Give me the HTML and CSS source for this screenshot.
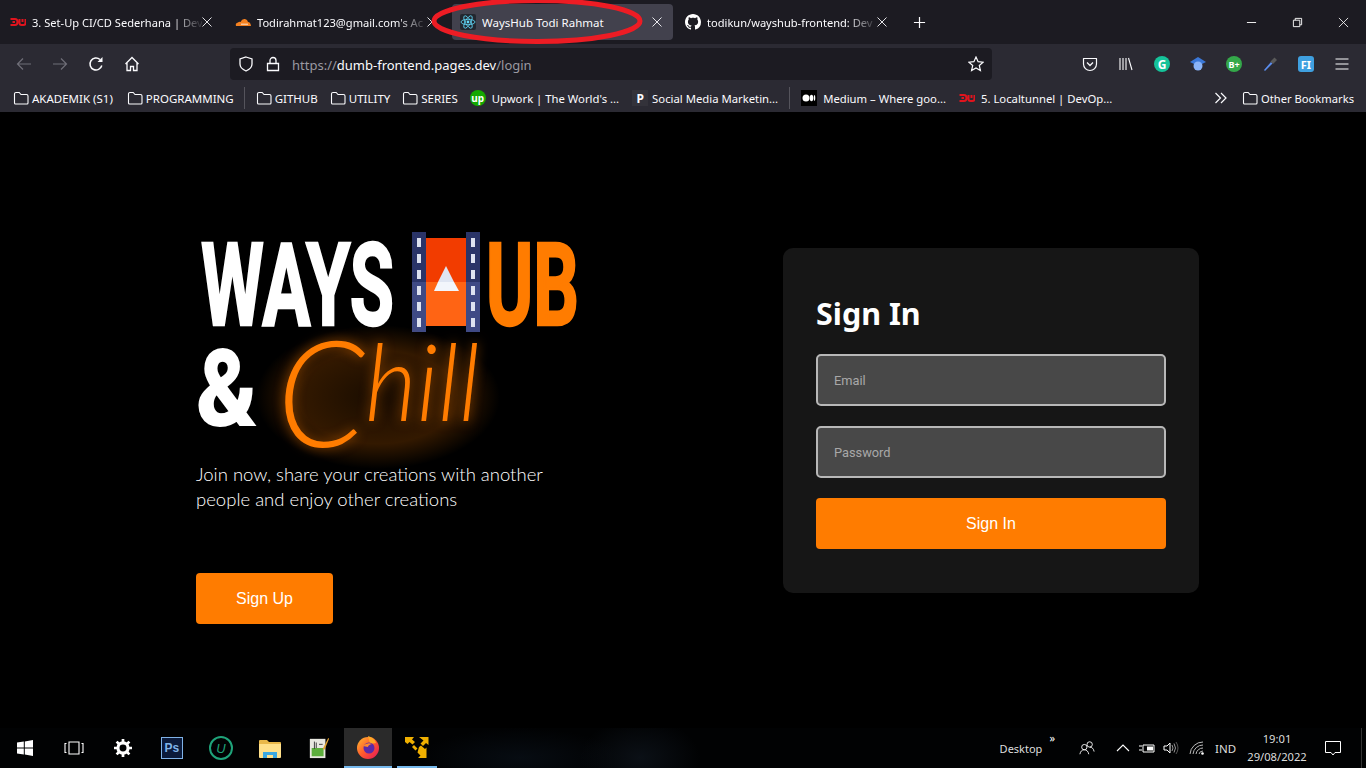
FILE: index.html
```html
<!DOCTYPE html>
<html lang="en">
<head>
    <meta charset="UTF-8">
    <title>WaysHub Todi Rahmat</title>
    <link rel="stylesheet" href="styles.css">
</head>
<body>
<svg class="defs" width="0" height="0">
    <symbol id="folder" viewBox="0 0 16 16">
        <path d="M1.500 13V4a1.500 1.500 0 0 1 1.500-1.500h3.200l1.800 2h5.500A1.500 1.500 0 0 1 15 6v7a1 1 0 0 1-1 1H2.500a1 1 0 0 1-1-1z" fill="none" stroke="#fbfbfe" stroke-width="1.100"/>
    </symbol>
    <symbol id="dw" viewBox="0 0 16 16">
        <path d="M.5 5H5Q7.500 5 7.500 8T5 11H.5M2.500 8H5M9.500 5V9Q9.500 11 11.500 11H13.500Q15.500 11 15.500 9V5M12.500 5V8" fill="none" stroke="#e0141e" stroke-width="2"/>
    </symbol>
    <symbol id="close" viewBox="0 0 10 10">
        <path d="M.5 .5l9 9M9.500 .5l-9 9" stroke="#fbfbfe" stroke-width=".9"/>
    </symbol>
</svg>

<header class="tabbar">
    <div class="tabs">
        <div class="tab">
            <svg class="favicon"><use href="#dw"/></svg>
            <span class="tab-title">3. Set-Up CI/CD Sederhana | Dev</span>
            <svg class="tab-close"><use href="#close"/></svg>
        </div>
        <div class="tab">
            <svg class="favicon" viewBox="0 0 16 16"><path d="M1 12q-1-3 2-3.500 1-1 2.500-.5Q7 4.500 10 5q2.500.5 3 3 2.500 0 3 4z" fill="#f48120"/><path d="M6 10.200h7" stroke="#fff" stroke-width=".8"/></svg>
            <span class="tab-title">Todirahmat123@gmail.com's Ac</span>
            <svg class="tab-close"><use href="#close"/></svg>
        </div>
        <div class="tab tab-active">
            <svg class="favicon" viewBox="0 0 16 16">
                <rect width="16" height="16" rx="2" fill="#23272f"/>
                <g fill="none" stroke="#61dafb" stroke-width=".8">
                    <ellipse cx="8" cy="8" rx="7" ry="2.700"/>
                    <ellipse cx="8" cy="8" rx="7" ry="2.700" transform="rotate(60 8 8)"/>
                    <ellipse cx="8" cy="8" rx="7" ry="2.700" transform="rotate(120 8 8)"/>
                </g>
                <circle cx="8" cy="8" r="1.400" fill="#61dafb"/>
            </svg>
            <span class="tab-title tab-title-full">WaysHub Todi Rahmat</span>
            <svg class="tab-close"><use href="#close"/></svg>
        </div>
        <div class="tab">
            <svg class="favicon" viewBox="0 0 16 16"><path fill="#fff" d="M8 0C3.580 0 0 3.580 0 8c0 3.540 2.290 6.530 5.470 7.590.4.070.55-.17.55-.38 0-.19-.01-.82-.01-1.490-2.010.37-2.530-.49-2.690-.94-.09-.23-.48-.94-.82-1.130-.28-.15-.68-.52-.01-.53.63-.01 1.080.58 1.230.82.72 1.210 1.870.87 2.330.66.07-.52.28-.87.51-1.070-1.780-.2-3.640-.89-3.640-3.950 0-.87.31-1.590.82-2.150-.08-.2-.36-1.020.08-2.120 0 0 .67-.21 2.200.82.64-.18 1.320-.27 2-.27.68 0 1.360.09 2 .27 1.530-1.040 2.200-.82 2.200-.82.44 1.100.16 1.920.08 2.120.51.56.82 1.270.82 2.150 0 3.070-1.870 3.750-3.650 3.950.29.25.54.73.54 1.480 0 1.070-.01 1.930-.01 2.200 0 .21.15.46.55.38A8.013 8.013 0 0 0 16 8c0-4.420-3.580-8-8-8z"/></svg>
            <span class="tab-title">todikun/wayshub-frontend: Dev</span>
            <svg class="tab-close"><use href="#close"/></svg>
        </div>
        <svg class="new-tab" viewBox="0 0 14 14"><path d="M7 1v12M1 7h12" stroke="#fbfbfe" stroke-width="1.300"/></svg>
    </div>
    <div class="win-controls">
        <span class="win-btn"><svg viewBox="0 0 12 12"><path d="M1 6h10" stroke="#fff"/></svg></span>
        <span class="win-btn"><svg viewBox="0 0 12 12"><path d="M1.500 3.500h7v7h-7zM3.500 3.500v-2h7v7h-2" fill="none" stroke="#fff"/></svg></span>
        <span class="win-btn"><svg viewBox="0 0 12 12"><path d="M1 1l10 10M11 1L1 11" stroke="#fff" stroke-width=".9"/></svg></span>
    </div>
    <!-- red marker drawn on the screenshot -->
    <svg class="marker" viewBox="0 0 220 48"><ellipse cx="106" cy="21" rx="103" ry="20.500" fill="none" stroke="#ed1c24" stroke-width="5"/></svg>
</header>

<nav class="navbar">
    <div class="nav-buttons">
        <svg class="nav-icon" viewBox="0 0 16 16"><path d="M15 8H1.500M7 2.500L1.500 8 7 13.500" fill="none" stroke="#6f6e78" stroke-width="1.200"/></svg>
        <svg class="nav-icon" viewBox="0 0 16 16"><path d="M1 8h13.500M9 2.500L14.500 8 9 13.500" fill="none" stroke="#6f6e78" stroke-width="1.200"/></svg>
        <svg class="nav-icon" viewBox="0 0 16 16"><path d="M13.800 9.500A6 6 0 1 1 12 3.500" fill="none" stroke="#fbfbfe" stroke-width="1.500"/><path d="M14.500 1v5h-5z" fill="#fbfbfe"/></svg>
        <svg class="nav-icon" viewBox="0 0 16 16"><path d="M1.500 8L8 1.500 14.500 8M3 7v7.500h3.500V10.500h3v4H13V7" fill="none" stroke="#fbfbfe" stroke-width="1.300"/></svg>
    </div>
    <div class="urlbar">
        <svg class="url-icon shield" viewBox="0 0 16 16"><path d="M8 1l6 2v5q0 4.500-6 7-6-2.500-6-7V3z" fill="none" stroke="#fbfbfe" stroke-width="1.300"/></svg>
        <svg class="url-icon lock" viewBox="0 0 16 16"><path d="M2.500 7.500h11v7h-11zM5 7.500V4.500a3 3 0 0 1 6 0v3" fill="none" stroke="#fbfbfe" stroke-width="1.300"/></svg>
        <span class="url-text"><span class="url-dim">https://</span>dumb-frontend.pages.dev<span class="url-dim">/login</span></span>
        <svg class="url-icon star" viewBox="0 0 16 16"><path d="M8 1l2.100 4.700 5 .5-3.800 3.300 1.100 5L8 11.900 3.600 14.500l1.100-5L.9 6.200l5-.5z" fill="none" stroke="#fbfbfe" stroke-width="1.200"/></svg>
    </div>
    <div class="toolbar">
        <span class="tool"><svg viewBox="0 0 16 16"><path d="M1.500 2.500h13V8a6.500 6.500 0 0 1-13 0z" fill="none" stroke="#fbfbfe" stroke-width="1.200" stroke-linejoin="round"/><path d="M5 6.500l3 3 3-3" fill="none" stroke="#fbfbfe" stroke-width="1.300"/></svg></span>
        <span class="tool"><svg viewBox="0 0 16 16"><path d="M2 2v12M5 2v12M8 2v12M10.500 2l3.500 12" stroke="#fbfbfe" stroke-width="1.100"/></svg></span>
        <span class="tool"><span class="ext ext-grammarly">G</span></span>
        <span class="tool"><svg viewBox="0 0 16 16"><path d="M8 1l8 5-8 4-8-4z" fill="#3b78d8"/><circle cx="8" cy="10" r="4.500" fill="#8ab4f8"/></svg></span>
        <span class="tool"><span class="ext ext-bplus">B+</span></span>
        <span class="tool"><svg viewBox="0 0 16 16"><path d="M2 14L9 6l1.500 1.500L3 15z" fill="#5b8def"/><path d="M8.500 5.500L12.500 1.500 15 4 11 8z" fill="#5a5a5a"/></svg></span>
        <span class="tool"><span class="ext ext-fi">FI</span></span>
        <span class="tool"><svg viewBox="0 0 16 16"><path d="M1.500 3h13M1.500 8h13M1.500 13h13" stroke="#fbfbfe" stroke-width="1.200"/></svg></span>
    </div>
</nav>

<div class="bookmarks">
    <a class="bm bm-first"><svg class="bm-icon"><use href="#folder"/></svg>AKADEMIK (S1)</a>
    <a class="bm"><svg class="bm-icon"><use href="#folder"/></svg>PROGRAMMING</a>
    <span class="bm-sep"></span>
    <a class="bm"><svg class="bm-icon"><use href="#folder"/></svg>GITHUB</a>
    <a class="bm"><svg class="bm-icon"><use href="#folder"/></svg>UTILITY</a>
    <a class="bm"><svg class="bm-icon"><use href="#folder"/></svg>SERIES</a>
    <a class="bm bm-site"><span class="bm-badge badge-up">up</span>Upwork | The World's ...</a>
    <a class="bm bm-site"><span class="bm-badge badge-p">P</span>Social Media Marketin...</a>
    <span class="bm-sep"></span>
    <a class="bm bm-site"><svg class="bm-icon bm-icon-wide" viewBox="0 0 16 16"><rect width="16" height="16" fill="#000"/><circle cx="5" cy="8" r="3.500" fill="#fff"/><ellipse cx="10.500" cy="8" rx="1.700" ry="3.200" fill="#fff"/><ellipse cx="13.500" cy="8" rx=".8" ry="3" fill="#fff"/></svg>Medium – Where goo...</a>
    <a class="bm bm-site"><svg class="bm-icon bm-icon-wide"><use href="#dw"/></svg>5. Localtunnel | DevOp...</a>
    <span class="bm-more">
        <svg class="bm-chevron" viewBox="0 0 14 14"><path d="M1.500 2l5 5-5 5M7 2l5 5-5 5" fill="none" stroke="#fbfbfe" stroke-width="1.200"/></svg>
        <a class="bm bm-other"><svg class="bm-icon"><use href="#folder"/></svg>Other Bookmarks</a>
    </span>
</div>

<main class="page">
    <section class="hero">
        <svg class="logo" viewBox="196 225 400 235">
            <defs>
                <radialGradient id="glow">
                    <stop offset="0" stop-color="#ff7c00" stop-opacity=".1"/>
                    <stop offset=".65" stop-color="#ff7c00" stop-opacity=".2"/>
                    <stop offset="1" stop-color="#ff7c00" stop-opacity="0"/>
                </radialGradient>
            </defs>
            <text class="logo-big" x="201" y="323.500" textLength="193" lengthAdjust="spacingAndGlyphs" fill="#fff" stroke="#fff">WAYS</text>
            <text class="logo-big" x="486" y="323.500" textLength="93" lengthAdjust="spacingAndGlyphs" fill="#ff7c00" stroke="#ff7c00">UB</text>

            <rect x="426" y="237" width="40" height="44" fill="#f23c00"/>
            <rect x="426" y="281" width="40" height="44" fill="#ff6414"/>
            <path d="M412 231h14v50h-14zM466 231h14v50h-14z" fill="#2a3468"/>
            <path d="M412 281h14v50h-14zM466 281h14v50h-14z" fill="#3f4a85"/>
            <path d="M417 237h4v9h-4zM417 253h4v9h-4zM417 269h4v9h-4zM417 285h4v9h-4zM417 301h4v9h-4zM417 317h4v9h-4zM471 237h4v9h-4zM471 253h4v9h-4zM471 269h4v9h-4zM471 285h4v9h-4zM471 301h4v9h-4zM471 317h4v9h-4z" fill="#dde2f0"/>
            <path d="M446 265l8 16h-16z" fill="#dfe5f2"/>
            <path d="M438 281h16l5 9h-25z" fill="#f2f5fb"/>

            <ellipse cx="378" cy="396" rx="122" ry="72" fill="url(#glow)"/>
            <text class="logo-amp" x="196" y="424.500" textLength="62" lengthAdjust="spacingAndGlyphs">&amp;</text>
            <text class="logo-chill" x="277" y="446" textLength="203" lengthAdjust="spacingAndGlyphs"><tspan class="chill-cap">C</tspan><tspan dy="-26">hill</tspan></text>
        </svg>
        <p class="tagline">Join now, share your creations with another<br>people and enjoy other creations</p>
        <button class="btn btn-signup">Sign Up</button>
    </section>

    <section class="card">
        <h1 class="card-title">Sign In</h1>
        <form class="form">
            <input class="field" type="email" placeholder="Email">
            <input class="field" type="password" placeholder="Password">
            <button class="btn btn-block" type="button">Sign In</button>
        </form>
    </section>
</main>

<footer class="taskbar">
    <div class="task-apps">
        <span class="task-item"><svg viewBox="0 0 16 16"><path d="M0 2.500L6.800 1.500v6H0zM7.800 1.400L16 0v7.500H7.800zM0 8.500h6.800v6L0 13.500zM7.800 8.500H16V16l-8.200-1.400z" fill="#fff"/></svg></span>
        <span class="task-item"><svg class="task-view" viewBox="0 0 20 16"><path d="M5 2h10v12H5zM2.500 3.500H1v9h1.500M17.500 3.500H19v9h-1.500" fill="none" stroke="#fff" stroke-width="1.100"/></svg></span>
        <span class="task-item"><svg class="gear" viewBox="0 0 16 16"><circle cx="8" cy="8" r="4.500" fill="none" stroke="#fff" stroke-width="2.800"/><path d="M8 0v3M8 13v3M0 8h3M13 8h3M2.300 2.300l2.200 2.200M11.500 11.500l2.200 2.200M13.700 2.300l-2.200 2.200M4.500 11.500l-2.200 2.200" stroke="#fff" stroke-width="2.400"/></svg></span>
        <span class="task-item"><span class="app-ps">Ps</span></span>
        <span class="task-item"><span class="app-u">U</span></span>
        <span class="task-item"><svg class="app-wide" viewBox="0 0 22 20"><path d="M0 3a1 1 0 0 1 1-1h7l2 2h11a1 1 0 0 1 1 1v14H0z" fill="#e9b84a"/><path d="M0 6h22v13a1 1 0 0 1-1 1H1a1 1 0 0 1-1-1z" fill="#ffe08a"/><path d="M4 14h14v6h-4v-3H8v3H4z" fill="#3aa7e0"/></svg></span>
        <span class="task-item"><svg class="app-wide" viewBox="0 0 22 24"><path d="M1 2h17v21H1z" fill="#e8e8e0"/><path d="M3 12h13v9H3z" fill="#5cae3c"/><path d="M6 5v8M8 6v6M11 8h4" stroke="#333" stroke-width="1"/><path d="M15 13L21 1l1 1-5 12z" fill="#e0a030"/></svg></span>
        <span class="task-item task-active"><svg class="app-large" viewBox="0 0 24 24">
            <defs>
                <linearGradient id="fox" x1="0" y1="0" x2="1" y2="1">
                    <stop offset="0" stop-color="#ffbd2e"/>
                    <stop offset=".5" stop-color="#ff5a2d"/>
                    <stop offset="1" stop-color="#e3125c"/>
                </linearGradient>
            </defs>
            <circle cx="12" cy="13" r="11" fill="url(#fox)"/>
            <path d="M12 1q7 2 8 7l-6 1z" fill="#ffa726"/>
            <circle cx="13" cy="13" r="5.500" fill="#5b2aa8"/>
            <path d="M7 11q4-4 9-2-4 1-4 3z" fill="#ff8a2d"/>
        </svg></span>
        <span class="task-item task-open"><svg class="app-large" viewBox="0 0 24 24"><path d="M0 2h9L7 4.500 10 7 7.500 9.500 4.500 7 2.500 9 0 7zM14 2h9.500v8L21 8l-3 3-2.500-2.500 3-3zM14 12l2-1.500 4 3.500 1.500-1.500V23H13l2.500-2.500-3-3zM9 10l3.500 3.500-2 2L7 12z" fill="#f0b000"/></svg></span>
    </div>
    <div class="tray">
        <span class="tray-desktop">Desktop</span>
        <span class="tray-more">&raquo;</span>
        <svg class="tray-icon tray-people" viewBox="0 0 18 16"><circle cx="6" cy="7" r="3" fill="none" stroke="#fff"/><circle cx="12" cy="4" r="3" fill="none" stroke="#fff"/><path d="M1 15q1-5 5-5t5 5M12 7q4 0 5 5" fill="none" stroke="#fff"/></svg>
        <svg class="tray-icon" viewBox="0 0 16 16"><path d="M2 11l6-6 6 6" fill="none" stroke="#fff" stroke-width="1.100"/></svg>
        <svg class="tray-icon" viewBox="0 0 16 16"><path d="M4 5h11v7H4z" fill="none" stroke="#fff"/><path d="M8 6.500h6v4H8z" fill="#fff"/><path d="M0 6h3M0 10h3" stroke="#fff"/></svg>
        <svg class="tray-icon tray-wide" viewBox="0 0 16 16"><path d="M1 6h3l3-3v10l-3-3H1z" fill="none" stroke="#fff"/><path d="M9 5q2 3 0 6M11 3.500q3 4.500 0 9" fill="none" stroke="#999"/><path d="M13 2q4 6 0 12" fill="none" stroke="#555"/></svg>
        <svg class="tray-icon tray-wide" viewBox="0 0 16 16"><path d="M1 14A13 13 0 0 1 14 2M4 14A10 10 0 0 1 14 5M7 14a7 7 0 0 1 7-6M10 14a4 4 0 0 1 4-3" fill="none" stroke="#bbb"/><circle cx="13.500" cy="13.500" r="1.300" fill="#fff"/></svg>
        <span class="tray-lang">IND</span>
        <span class="clock"><span>19:01</span><span>29/08/2022</span></span>
        <svg class="tray-icon tray-note" viewBox="0 0 16 16"><path d="M.5 1.500h15v11H10l-2 2.500-2-2.500H.5z" fill="none" stroke="#fff"/></svg>
        <span class="tray-peek"></span>
    </div>
</footer>
</body>
</html>
```

FILE: styles.css
```css
* {
    margin: 0;
    padding: 0;
    box-sizing: border-box;
}

html, body {
    height: 100%;
}

body {
    width: 1366px;
    height: 768px;
    overflow: hidden;
    display: flex;
    flex-direction: column;
    background-color: #000;
    color: #fbfbfe;
    font-family: "Noto Sans", "Open Sans", sans-serif;
    font-size: 12px;
}

.defs {
    position: absolute;
}

/* tab strip */
.tabbar {
    height: 44px;
    flex: none;
    display: flex;
    justify-content: space-between;
    position: relative;
    background-color: #1c1b22;
}

.tabs {
    display: flex;
    align-items: center;
    gap: 4px;
    padding-left: 2px;
}

.tab {
    width: 221px;
    height: 36px;
    display: flex;
    align-items: center;
    padding: 0 11px 0 8px;
    border-radius: 4px;
}

.tab-active {
    background-color: #42414d;
}

.favicon {
    width: 16px;
    height: 16px;
    flex: none;
    margin-right: 6px;
}

.tab-title {
    flex: 1;
    overflow: hidden;
    white-space: nowrap;
    font-size: 11.100px;
    -webkit-mask-image: linear-gradient(to right, #000 82%, rgba(0, 0, 0, 0.15) 98%);
    mask-image: linear-gradient(to right, #000 82%, rgba(0, 0, 0, 0.15) 98%);
}

.tab-title-full {
    font-size: 11.500px;
    -webkit-mask-image: none;
    mask-image: none;
}

.tab-close {
    width: 10px;
    height: 10px;
    flex: none;
}

.new-tab {
    width: 13px;
    height: 13px;
    margin-left: 11px;
}

.win-controls {
    display: flex;
}

.win-btn {
    width: 46px;
    height: 44px;
    display: flex;
    align-items: center;
    justify-content: center;
}

.win-btn svg {
    width: 11px;
    height: 11px;
}

.marker {
    position: absolute;
    left: 431px;
    top: 0;
    width: 220px;
    height: 48px;
}

/* nav bar */
.navbar {
    height: 40px;
    flex: none;
    display: flex;
    align-items: center;
    background-color: #2b2a33;
}

.nav-buttons {
    width: 230px;
    display: flex;
    align-items: center;
    gap: 20px;
    padding-left: 16px;
}

.nav-icon {
    width: 16px;
    height: 16px;
}

.urlbar {
    width: 762px;
    height: 32px;
    display: flex;
    align-items: center;
    padding: 0 8px;
    border-radius: 4px;
    background-color: #1c1b22;
}

.url-icon {
    width: 16px;
    height: 16px;
    flex: none;
}

.lock {
    margin-left: 11px;
}

.url-text {
    flex: 1;
    margin-left: 11px;
    padding-top: 1px;
    font-size: 13px;
}

.url-dim {
    color: #9a99a1;
}

.toolbar {
    display: flex;
    margin-left: 80px;
}

.tool {
    width: 36px;
    display: flex;
    justify-content: center;
    align-items: center;
}

.tool svg {
    width: 16px;
    height: 16px;
}

.ext {
    width: 16px;
    height: 16px;
    display: flex;
    align-items: center;
    justify-content: center;
    border-radius: 50%;
    color: #fff;
    font-size: 9px;
    font-weight: 700;
}

.ext-grammarly {
    background-color: #15c39a;
    font-size: 12px;
}

.ext-bplus {
    background-color: #34a84a;
}

.ext-fi {
    border-radius: 3px;
    background-color: #3fa0e0;
    font-size: 11px;
}

/* bookmarks */
.bookmarks {
    height: 28px;
    flex: none;
    display: flex;
    align-items: center;
    padding-left: 13px;
    background-color: #2b2a33;
    font-size: 11.500px;
}

.bm {
    display: flex;
    align-items: center;
    white-space: nowrap;
    margin-right: 12px;
}

.bm-first {
    margin-right: 14px;
}

.bm-site {
    margin-right: 13px;
    font-size: 11.300px;
}

.bm-icon {
    width: 16px;
    height: 16px;
    margin-right: 3px;
    flex: none;
}

.bm-icon-wide {
    margin-right: 6px;
}

.bm-sep {
    width: 1px;
    height: 22px;
    margin: 0 11px 0 -2px;
    background-color: #55545c;
}

.bm-badge {
    width: 16px;
    height: 16px;
    display: flex;
    align-items: center;
    justify-content: center;
    flex: none;
    margin-right: 6px;
    font-size: 10px;
    font-weight: 700;
}

.badge-up {
    border-radius: 50%;
    background-color: #14a800;
    color: #fff;
}

.badge-p {
    margin-right: 4px;
    background-color: #33323a;
    font-size: 12px;
}

.bm-more {
    margin-left: auto;
    display: flex;
    align-items: center;
}

.bm-chevron {
    width: 14px;
    height: 14px;
    margin-right: 14px;
}

.bm-other {
    margin-right: 12px;
    font-size: 11.200px;
}

/* page */
.page {
    flex: 1;
    display: flex;
    justify-content: space-between;
    align-items: center;
    padding: 0 167px 0 196px;
    background-color: #000;
    font-family: "Liberation Sans", Arial, sans-serif;
}

.hero {
    padding-top: 9px;
    width: 400px;
}

.logo {
    display: block;
    width: 400px;
    height: 235px;
    overflow: visible;
    margin-bottom: 1px;
}

.logo-big {
    font-family: "Liberation Sans Narrow", "Roboto", sans-serif;
    font-size: 115px;
    font-weight: 700;
    stroke-width: 2.500px;
}

.logo-amp {
    font-family: "Roboto", sans-serif;
    font-size: 108px;
    font-weight: 900;
    fill: #fff;
}

.logo-chill {
    font-family: "Lato", sans-serif;
    font-style: italic;
    font-weight: 300;
    font-size: 106px;
    fill: #ff7c00;
    filter: drop-shadow(0 0 6px rgba(255, 124, 0, 0.5));
}

.chill-cap {
    font-size: 148px;
}

.tagline {
    font-family: "Lato", sans-serif;
    font-size: 18.500px;
    font-weight: 300;
    line-height: 25px;
    color: #fff;
}

.btn {
    display: block;
    height: 51px;
    padding-top: 1px;
    border: 0;
    border-radius: 4px;
    background-color: #ff7c00;
    color: #fff;
    font-family: "Liberation Sans", Arial, sans-serif;
    font-size: 16px;
}

.btn-signup {
    width: 137px;
    margin-top: 61px;
}

.btn-block {
    width: 350px;
}

.card {
    width: 416px;
    height: 345px;
    padding: 33px;
    border-radius: 10px;
    background-color: #161616;
}

.card-title {
    height: 73px;
    padding-top: 11px;
    font-family: "Noto Sans", sans-serif;
    font-size: 30.500px;
    font-weight: 700;
    line-height: 42px;
    color: #fff;
}

.form {
    display: flex;
    flex-direction: column;
    gap: 20px;
}

.field {
    width: 350px;
    height: 52px;
    padding: 2px 16px 0;
    border: 2px solid #b8b8b8;
    border-radius: 5px;
    background-color: #484848;
    color: #fff;
    font-family: "Roboto", sans-serif;
    font-size: 12.800px;
}

.field::placeholder {
    color: #a8a8a8;
    opacity: 1;
}

/* windows taskbar */
.taskbar {
    height: 40px;
    flex: none;
    display: flex;
    justify-content: space-between;
    background:
        radial-gradient(ellipse 60px 40px at 640px 30px, #0b1016, transparent),
        radial-gradient(ellipse 100px 30px at 520px 30px, #070c12, transparent),
        #010203;
}

.task-apps {
    display: flex;
}

.task-item {
    width: 49.140px;
    height: 40px;
    display: flex;
    align-items: center;
    justify-content: center;
}

.task-item svg {
    width: 16px;
    height: 16px;
}

.task-item .task-view {
    width: 20px;
}

.task-item .gear {
    width: 18px;
    height: 18px;
}

.task-item .app-wide {
    width: 22px;
    height: 22px;
}

.task-item .app-large {
    width: 24px;
    height: 24px;
}

.task-active {
    width: 48px;
    background-color: #2a2a2a;
    border-bottom: 2px solid #76b9ed;
}

.task-open {
    width: 40px;
    margin-left: 5px;
    border-bottom: 2px solid #76b9ed;
}

.app-ps {
    width: 22px;
    height: 22px;
    display: flex;
    align-items: center;
    justify-content: center;
    border: 1px solid #7fb2e8;
    background-color: #0b1a3a;
    color: #7fb2e8;
    font-family: "Liberation Sans", sans-serif;
    font-size: 12px;
    font-weight: 700;
}

.app-u {
    width: 24px;
    height: 24px;
    display: flex;
    align-items: center;
    justify-content: center;
    border: 2px solid #1fa37a;
    border-radius: 50%;
    color: #1fa37a;
    font-family: "Liberation Sans", sans-serif;
    font-size: 13px;
    font-style: italic;
}

.tray {
    display: flex;
    align-items: center;
    font-size: 11px;
    color: #ddd;
}

.tray-desktop {
    margin-right: 7px;
}

.tray-more {
    align-self: flex-start;
    margin: 2px 24px 0 0;
    color: #fff;
    font-size: 11px;
}

.tray-icon {
    width: 16px;
    height: 16px;
    margin-right: 8px;
}

.tray-people {
    margin-right: 20px;
}

.tray-wide {
    margin-right: 10px;
}

.tray-lang {
    width: 26px;
    font-size: 11.500px;
}

.clock {
    width: 72px;
    display: flex;
    flex-direction: column;
    align-items: center;
    font-size: 11.200px;
    line-height: 18px;
}

.tray-note {
    margin: 0 20px 0 12px;
}

.tray-peek {
    width: 1px;
    height: 40px;
    margin-right: 4px;
    background-color: #333;
}
```
